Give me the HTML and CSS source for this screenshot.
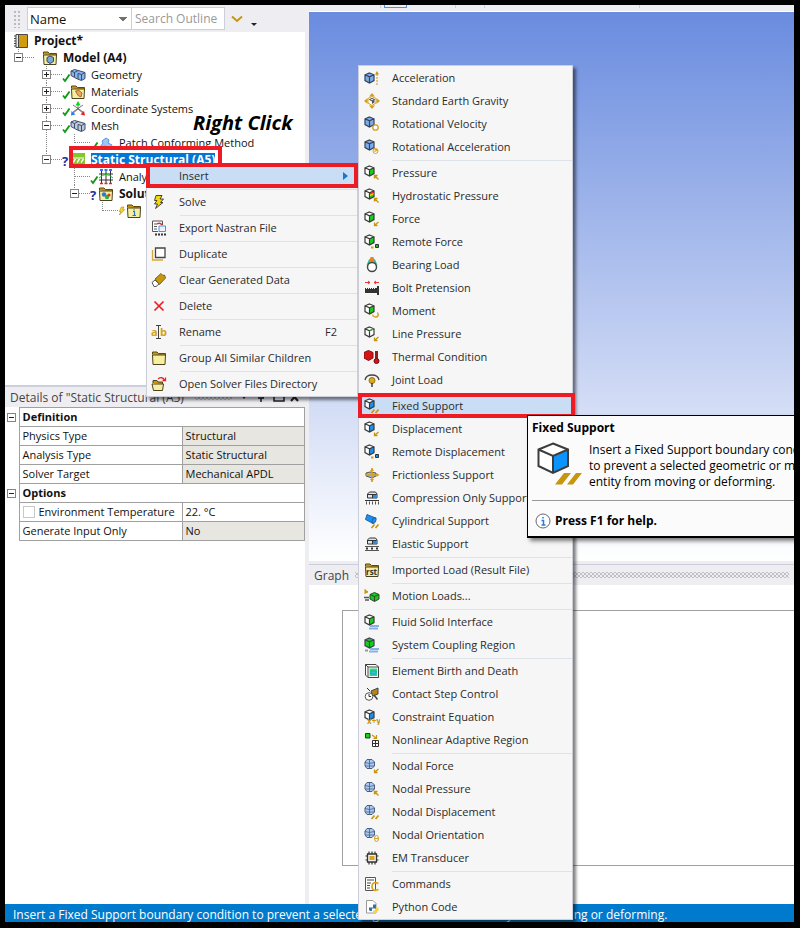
FILE: index.html
```html
<!DOCTYPE html>
<html lang="en">
<head>
  <meta charset="UTF-8">
  <title>Mechanical - Static Structural</title>
  <link rel="stylesheet" href="styles.css">
</head>
<body>

<!-- icon shapes -->
<svg class="defs" width="0" height="0">
  <symbol id="cube" viewBox="0 0 16 16">
    <path d="M5.5 1 10 2.8V8.6L5.5 11 1 8.6V2.8Z" fill="#fff"/>
    <path d="M5.5 4.8 10 2.8V8.6L5.5 11Z" fill="currentColor"/>
    <path d="M5.5 1 10 2.8V8.6L5.5 11 1 8.6V2.8ZM1 2.8 5.5 4.8 10 2.8M5.5 4.8V11" fill="none" stroke="#3a3a3a" stroke-width="1.2"/>
  </symbol>
  <symbol id="solid" viewBox="0 0 16 16">
    <path d="M5.5 1 10 2.8V8.6L5.5 11 1 8.6V2.8Z" fill="currentColor"/>
    <path d="M5.5 1 10 2.8V8.6L5.5 11 1 8.6V2.8ZM1 2.8 5.5 4.8 10 2.8M5.5 4.8V11" fill="none" stroke="#3a4250" stroke-width="1.2"/>
  </symbol>
  <symbol id="node" viewBox="0 0 16 16">
    <path d="M3 1.5H8L10.5 4V8L8 10.5H3L1 8V4Z" fill="#a9cbf6" stroke="#4a5d7d"/>
    <path d="M1 4.5 5.5 5.5 10.5 4.5M5.5 1.5V10.5M1.500 8H10" fill="none" stroke="#4a5d7d" stroke-width=".8"/>
  </symbol>
  <symbol id="arrow-in" viewBox="0 0 16 16"><path d="M14.500 14.500 11 11M10.500 13.500V10.500H13.500" fill="none" stroke="#c8960c" stroke-width="1.400"/></symbol>
  <symbol id="arrow-out" viewBox="0 0 16 16"><path d="M14.500 11 11 14M10.500 11.500V14.500H13.500" fill="none" stroke="#c8960c" stroke-width="1.300"/></symbol>
  <symbol id="stripes" viewBox="0 0 16 16"><path d="M7.500 15 10.500 11.500M11.500 15 14.500 11.500" fill="none" stroke="#c8960c" stroke-width="1.700"/></symbol>
  <symbol id="folder" viewBox="0 0 16 16">
    <path d="M1.500 4.500V2H6L7.500 3.500H14.500V5.500" fill="#c8960c" stroke="#5a4a10"/>
    <path d="M1.500 5H14.500L14 14.500H2Z" fill="#f7efa0" stroke="#4a4320"/>
  </symbol>
  <symbol id="flash" viewBox="0 0 16 16"><path d="M5 1.500H11L9 5H12.500L9.500 8.500H12L4.500 14.500 6.500 10H3.500L6 6.500H3.500Z" fill="#f5d90a" stroke="#333" stroke-width=".9"/></symbol>
  <symbol id="ground" viewBox="0 0 16 16">
    <path d="M5.500 2H11.500L13 4V8H3.500V4Z" fill="#dfe6ee" stroke="#333"/>
    <path d="M8.500 4.500H12.500V8H8.500Z" fill="#1a90f0"/><path d="M3.500 4.500H12.500M8.500 4.500V8" stroke="#333"/>
  </symbol>
  <symbol id="check" viewBox="0 0 8 16"><path d="M1 11.500 3 14 7.500 7.500" fill="none" stroke="#119a17" stroke-width="1.900"/></symbol>
  <symbol id="parts" viewBox="0 0 16 16">
    <path d="M4.500 2.500 10 4 15 5.500V11.500L11.500 13.500 7.500 12 4.500 10.500 1 8.500V4Z" fill="currentColor" stroke="#3d4c66"/>
    <path d="M1 4 4.500 5.500 8 3.500M4.500 5.500V10M8 6.500 11.500 7.500 15 5.500M8 6.500V12M11.500 7.500V13" fill="none" stroke="#3d4c66"/>
  </symbol>
</svg>

<div class="screen">
  <div class="side">
    <section class="outline">
      <div class="toolbar">
        <span class="grip"></span>
        <select class="name-select" aria-label="Search by"><option>Name</option></select>
        <input class="search" type="text" placeholder="Search Outline" aria-label="Search Outline">
        <svg class="expand" viewBox="0 0 12 8"><path d="M1 1.500 6 6 11 1.500" fill="none" stroke="#c8960c" stroke-width="2"/></svg>
        <span class="caret"></span>
      </div>

      <div class="tree">
        <div class="row root">
          <svg class="icon" viewBox="0 0 16 16"><path d="M3.500 1.500H14.500V14.500H3.500Z" fill="#cf9c12" stroke="#4b4b4b"/><path d="M3 1.500H5.500V14.500H3Z" fill="#e8eef5" stroke="#444"/><path d="M1 3H3M1 5.500H3M1 8H3M1 10.500H3M1 13H3" stroke="#444"/></svg>
          <b>Project*</b>
        </div>
        <ul>
          <li>
            <div class="row">
              <span class="toggle"></span><span class="mark"></span>
              <svg class="icon"><use href="#folder"/><path d="M8 6 11.500 7.500V11.500L8 13.500 5 11.500V7.500Z" fill="#7aa6dc" stroke="#39485f"/></svg>
              <b>Model (A4)</b>
            </div>
            <ul>
              <li>
                <div class="row"><span class="toggle plus"></span><svg class="mark"><use href="#check"/></svg><svg class="icon part-blue"><use href="#parts"/></svg><span>Geometry</span></div>
              </li>
              <li>
                <div class="row"><span class="toggle plus"></span><svg class="mark"><use href="#check"/></svg><svg class="icon"><use href="#folder"/><path d="M5.500 7 9 6.500 12 9 11 13 8 11.500Z" fill="#e8a868" stroke="#a96b2c"/></svg><span>Materials</span></div>
              </li>
              <li>
                <div class="row"><span class="toggle plus"></span><svg class="mark"><use href="#check"/></svg>
                  <svg class="icon" viewBox="0 0 16 16"><path d="M8 8V2M8 8 2 13M8 8 14 13M3 4 13 11M13 4 3 11" stroke="#555" stroke-width=".8"/><path d="M8 0 10.500 4.500H5.500Z" fill="#12d512"/><path d="M1 14.500 1.500 10 5.500 13.500Z" fill="#2b7bea"/><path d="M15 14.500 10.500 13.500 14 10Z" fill="#ee1c1c"/></svg>
                  <span>Coordinate Systems</span></div>
              </li>
              <li>
                <div class="row"><span class="toggle"></span><svg class="mark"><use href="#check"/></svg><svg class="icon part-grey"><use href="#parts"/></svg><span>Mesh</span></div>
                <ul>
                  <li>
                    <div class="row"><span class="stub"></span><svg class="mark"><use href="#check"/></svg>
                      <svg class="icon" viewBox="0 0 16 16"><path d="M2 12 5 8 4 6 8 3 11 5 10 8 14 10 12 14 7 11Z" fill="#9cc6f5" stroke="#5a94dd"/></svg>
                      <span>Patch Conforming Method</span></div>
                  </li>
                </ul>
              </li>
              <li>
                <div class="row marked">
                  <span class="toggle"></span><span class="mark query">?</span>
                  <svg class="icon" viewBox="0 0 16 16"><path d="M1 1H15V15H1Z" fill="#84c62c"/><path d="M3 6H14" stroke="#fff"/><path d="M3 10.500 5.500 7M7 10.500 9.500 7M11 10.500 13.500 7" stroke="#fff" stroke-width="1.300"/></svg>
                  <b class="selected">Static Structural (A5)</b>
                </div>
                <ul>
                  <li>
                    <div class="row"><span class="stub"></span><svg class="mark"><use href="#check"/></svg>
                      <svg class="icon" viewBox="0 0 16 16"><path d="M3.500 2V14M8 2V14M12.500 2V14M1 5H15M1 11H15" stroke="#333"/><path d="M1 9Q8 2 15 9" fill="none" stroke="#19c419"/><path d="M2 1H5M6.500 1H9.500M11 1H14" stroke="#1637e8" stroke-width="1.500"/><path d="M2 14.500H5M6.500 14.500H9.500M11 14.500H14" stroke="#ee2222" stroke-width="1.500"/></svg>
                      <span>Analysis Settings</span></div>
                  </li>
                  <li>
                    <div class="row"><span class="toggle"></span><span class="mark query">?</span><svg class="icon"><use href="#folder"/><circle cx="6" cy="8.500" r="2.200" fill="#2f76d9"/><circle cx="9" cy="11" r="2.200" fill="#28b34a"/><circle cx="11" cy="9" r="1.600" fill="#d8382c"/></svg><b>Solution (A6)</b></div>
                    <ul>
                      <li>
                        <div class="row"><span class="stub"></span><svg class="mark" viewBox="2 0 12 16"><path d="M7 2H11L9 6H12L4 14 6.500 9H4Z" fill="#f9dc24" stroke="#b98a12"/></svg><svg class="icon"><use href="#folder"/><path d="M7 8.500H8.500V12.500M6.500 12.500H10M8 6.200V7.400" fill="none" stroke="#2a6fd6" stroke-width="1.200"/></svg><span>Solution Information</span></div>
                      </li>
                    </ul>
                  </li>
                </ul>
              </li>
            </ul>
          </li>
        </ul>
      </div>
      <strong class="note">Right Click</strong>
    </section>

    <section class="details">
      <div class="panel-title">
        <span>Details of "Static Structural (A5)"</span>
        <span class="dots"></span>
        <svg class="title-tools" viewBox="0 0 62 12"><path d="M3 4H9L6 8Z" fill="#222"/><path d="M20 7H26M21 1H25V7M23 7V11" fill="none" stroke="#222" stroke-width="1.500"/><path d="M36 2H46V10H36Z" fill="none" stroke="#222" stroke-width="1.500"/><path d="M53 2 60 10M60 2 53 10" stroke="#222" stroke-width="2"/></svg>
      </div>
      <table>
        <colgroup><col class="col-gutter"><col class="col-name"><col></colgroup>
        <tbody>
          <tr class="group"><td class="gutter"><span class="toggle"></span></td><th colspan="2">Definition</th></tr>
          <tr><td class="gutter"></td><th scope="row">Physics Type</th><td class="fixed">Structural</td></tr>
          <tr><td class="gutter"></td><th scope="row">Analysis Type</th><td class="fixed">Static Structural</td></tr>
          <tr><td class="gutter"></td><th scope="row">Solver Target</th><td class="fixed">Mechanical APDL</td></tr>
          <tr class="group"><td class="gutter"><span class="toggle"></span></td><th colspan="2">Options</th></tr>
          <tr><td class="gutter"></td><th scope="row"><label><input type="checkbox">Environment Temperature</label></th><td>22. °C</td></tr>
          <tr><td class="gutter"></td><th scope="row">Generate Input Only</th><td class="fixed">No</td></tr>
        </tbody>
      </table>
    </section>
  </div>

  <main class="work">
    <section class="view">
      <div class="strip"><i class="wide"></i><i class="active"></i><i class="mid"></i><i class="narrow"></i><i class="rest"></i></div>
      <div class="canvas"></div>
    </section>
    <section class="graph">
      <div class="panel-title"><span>Graph</span><span class="dots"></span></div>
      <div class="plot"></div>
    </section>
  </main>

  <footer class="status">Insert a Fixed Support boundary condition to prevent a selected geometric or mesh entity from moving or deforming.</footer>

  <ul class="menu context">
    <li class="framed"><button class="hover"><span class="icon"></span>Insert<span class="more"></span></button></li>
    <li class="sep"></li>
    <li><button><svg class="icon"><use href="#flash"/></svg>Solve</button></li>
    <li class="sep"></li>
    <li><button><svg class="icon" viewBox="0 0 16 16"><path d="M7 11.500H1.500V1H11.500V5" fill="#fff" stroke="#555"/><path d="M3 4H6M3 6.500H6M3 9H6" stroke="#555"/><path d="M6 4Q9 2 11 5" fill="none" stroke="#e22" stroke-width="1.500"/><path d="M8 6H14.500V11.500H8Z" fill="#eaf3ff" stroke="#4a90e2"/><path d="M4 14.500H15" stroke="#333" stroke-width="2" stroke-dasharray="2 1"/></svg>Export Nastran File</button></li>
    <li class="sep"></li>
    <li><button><svg class="icon" viewBox="0 0 16 16"><path d="M1.500 4V14H12" fill="none" stroke="#d3a93a" stroke-width="1.300"/><path d="M4.500 2H14V11.500H4.500Z" fill="#fff" stroke="#444" stroke-width="1.300"/></svg>Duplicate</button></li>
    <li class="sep"></li>
    <li><button><svg class="icon" viewBox="0 0 16 16"><path d="M1 10.500 4 8 8 12 5 14.500H3Z" fill="#fff" stroke="#555"/><path d="M4 7 10 1.500 12 3.500 13.500 3 14.500 6 8.500 12.500Z" fill="#c8960c" stroke="#7c651c"/></svg>Clear Generated Data</button></li>
    <li class="sep"></li>
    <li><button><svg class="icon" viewBox="0 0 16 16"><path d="M3.500 3.500 12.500 12.500M12.500 3.500 3.500 12.500" stroke="#ed1c24" stroke-width="1.700"/></svg>Delete</button></li>
    <li class="sep"></li>
    <li><button><svg class="icon" viewBox="0 0 16 16"><text class="glyph" x="0" y="12">a</text><text class="glyph" x="9" y="12">b</text><path d="M5 1.500H10M5 14.500H10M7.500 1.500V14.500" stroke="#444"/></svg>Rename<kbd>F2</kbd></button></li>
    <li class="sep"></li>
    <li><button><svg class="icon"><use href="#folder"/></svg>Group All Similar Children</button></li>
    <li class="sep"></li>
    <li><button><svg class="icon" viewBox="0 0 16 16"><path d="M2 7V4.500H6L7 6H11.500V8" fill="#c8960c" stroke="#4a4320"/><path d="M1 8H12.500L11.500 14.500H2.500Z" fill="#f7efa0" stroke="#4a4320"/><path d="M7 3Q11 0 13.500 4M14.500 1.500V4.500H11.500" fill="none" stroke="#e22" stroke-width="1.300"/></svg>Open Solver Files Directory</button></li>
  </ul>

  <ul class="menu insert">
    <li><button><svg class="icon blue-soft"><use href="#solid" y="2"/><path d="M13 15V4" stroke="#c8960c" stroke-dasharray="2 1"/><path d="M13 1 15 4.500H11Z" fill="#c8960c"/></svg>Acceleration</button></li>
    <li><button><svg class="icon" viewBox="0 0 16 16"><path d="M8 0 11 3.500H5ZM8 16 11 12.500H5ZM0 8 3.500 5V11ZM16 8 12.500 5V11Z" fill="#d3a020"/><path d="M8 3.500 12 5.500V10L8 12.500 4 10V5.500Z" fill="#fff" stroke="#d3a020"/><path d="M5.500 6.500 8 5.500 10.500 6.500 8 8Z" fill="#fff" stroke="#444"/><path d="M8 8 10.500 6.500V9.500L8 11Z" fill="#555"/></svg>Standard Earth Gravity</button></li>
    <li><button><svg class="icon blue-soft"><use href="#solid"/><circle cx="11.500" cy="11.500" r="2.700" fill="#fff" stroke="#d3a020" stroke-width="1.300"/></svg>Rotational Velocity</button></li>
    <li><button><svg class="icon blue-soft"><use href="#solid"/><circle cx="11.500" cy="12" r="2.500" fill="#fff" stroke="#d3a020"/><path d="M10 9.500 13 11 10.500 12.500" fill="none" stroke="#d3a020" stroke-width="1.300"/></svg>Rotational Acceleration</button></li>
    <li class="sep"></li>
    <li><button><svg class="icon green"><use href="#cube"/><use href="#arrow-in"/></svg>Pressure</button></li>
    <li><button><svg class="icon green"><use href="#cube"/><path d="M6 5 9.500 3.500V5L6 6.500Z" fill="#e22"/><path d="M6 6.500 9.500 5V6.500L6 8.200Z" fill="#fc0"/><use href="#arrow-in"/></svg>Hydrostatic Pressure</button></li>
    <li><button><svg class="icon green"><use href="#cube"/><use href="#arrow-out"/></svg>Force</button></li>
    <li><button><svg class="icon green"><use href="#cube"/><path d="M11.500 10.500H14.500V13.500H11.500Z" fill="#19c419" stroke="#333"/><path d="M7 13.500H9.500" stroke="#d3a020" stroke-width="2"/></svg>Remote Force</button></li>
    <li><button><svg class="icon" viewBox="0 0 16 16"><path d="M2.500 8 5 2.500 8 1V6Z" fill="#28b8a0"/><path d="M13.500 8 11 2.500 8 1V6Z" fill="#28b8a0"/><path d="M5.500 5 6.500 0H9.500L10.500 5Z" fill="#f08018"/><circle cx="8" cy="10" r="4.500" fill="#fff" stroke="#444" stroke-width="1.400"/></svg>Bearing Load</button></li>
    <li><button><svg class="icon" viewBox="0 0 16 16"><path d="M1 2.500H6M10 2.500H15M4 1 6 2.500 4 4M12 1 10 2.500 12 4" fill="none" stroke="#e33"/><path d="M1 10.500H13" stroke="#333" stroke-width="5"/><path d="M14 6V15" stroke="#333" stroke-width="2"/><path d="M2 8.500H12" stroke="#f5f5f5" stroke-dasharray="1 1"/></svg>Bolt Pretension</button></li>
    <li><button><svg class="icon green"><use href="#cube"/><path d="M13.500 9.500Q15.500 14 11.500 14 8.500 14 9 11.500" fill="none" stroke="#d3a020" stroke-width="1.400"/></svg>Moment</button></li>
    <li><button><svg class="icon clear"><use href="#cube"/><path d="M5.500 4.800 10 2.800" stroke="#19c419"/><use href="#arrow-out"/></svg>Line Pressure</button></li>
    <li><button><svg class="icon" viewBox="0 0 16 16"><path d="M4.500 1.500 9 3.500V9L4.500 11.500 0 9V3.500Z" fill="#d51515" stroke="#7a1010"/><path d="M12.500 2V12" stroke="#8e1d1d" stroke-width="3"/><circle cx="12.500" cy="12" r="2.500" fill="#d51515" stroke="#6d1010"/></svg>Thermal Condition</button></li>
    <li><button><svg class="icon" viewBox="0 0 16 16"><path d="M1 8Q2 3 8 3T15 8" fill="none" stroke="#444" stroke-width="1.300"/><circle cx="8" cy="8.500" r="3" fill="#dba928" stroke="#9a7414"/><path d="M8 11V15" stroke="#333" stroke-width="1.400"/></svg>Joint Load</button></li>
    <li class="sep"></li>
    <li class="framed wide"><button class="hover"><svg class="icon blue"><use href="#cube"/><use href="#stripes"/></svg>Fixed Support</button></li>
    <li><button><svg class="icon blue"><use href="#cube"/><use href="#arrow-out"/></svg>Displacement</button></li>
    <li><button><svg class="icon blue"><use href="#cube"/><path d="M11.500 10.500H14.500V13.500H11.500Z" fill="#1a90f0" stroke="#333"/><path d="M7 13.500H9.500" stroke="#d3a020" stroke-width="2"/></svg>Remote Displacement</button></li>
    <li><button><svg class="icon" viewBox="0 0 16 16"><path d="M2 6 6 5 12 6V9L8 11 2 9Z" fill="#aeb7bf" stroke="#555"/><path d="M8 1V15M2 8H14" stroke="#d3a020" stroke-width="1.500"/><path d="M8 1 10 4H6ZM8 15 10 12H6ZM15.500 8 12.500 6V10Z" fill="#d3a020"/></svg>Frictionless Support</button></li>
    <li><button><svg class="icon"><use href="#ground"/><path d="M1 10.500H15" stroke="#333"/><path d="M2 13H15" stroke="#555" stroke-width="3" stroke-dasharray="1 2"/></svg>Compression Only Support</button></li>
    <li><button><svg class="icon" viewBox="0 0 16 16"><path d="M3 1.500 11.500 5 9 10.500 1.500 6.500Z" fill="#1a90f0" stroke="#2464a8"/><ellipse cx="10" cy="7.500" rx="1.700" ry="3" fill="#1a90f0" stroke="#2464a8" transform="rotate(25 10 7.500)"/><use href="#stripes"/></svg>Cylindrical Support</button></li>
    <li><button><svg class="icon"><use href="#ground"/><path d="M1 10.500H15M1 14.500H15" stroke="#555"/><path d="M2 12.500H15" stroke="#333" stroke-width="2" stroke-dasharray="2 3"/></svg>Elastic Support</button></li>
    <li class="sep"></li>
    <li><button><svg class="icon"><use href="#folder"/><text class="tag" x="2" y="13">rst</text></svg>Imported Load (Result File)</button></li>
    <li class="sep"></li>
    <li><button><svg class="icon" viewBox="0 0 16 16"><path d="M1 1V6M1 2 4 4 1 5" stroke="#c8960c" fill="#c8960c"/><path d="M0 9.500H5M1 12H5" stroke="#555" stroke-width="1.500"/><path d="M10.500 4.500 15 6.500V11L10.500 13.500 6 11V6.500Z" fill="#25c12c" stroke="#244d26"/><path d="M6 6.500 10.500 8.500 15 6.500M10.500 8.500V13" fill="none" stroke="#244d26"/></svg>Motion Loads...</button></li>
    <li class="sep"></li>
    <li><button><svg class="icon green"><use href="#cube"/><path d="M6 12H15M5 14.500H14" stroke="#8ab0e8" stroke-width="2"/></svg>Fluid Solid Interface</button></li>
    <li><button><svg class="icon green"><use href="#solid"/><path d="M6 12H15M5 14.500H14" stroke="#8ab0e8" stroke-width="2"/><path d="M1 13.500H4" stroke="#999" stroke-width="2"/></svg>System Coupling Region</button></li>
    <li class="sep"></li>
    <li><button><svg class="icon" viewBox="0 0 16 16"><path d="M1.500 1.500H12L14.500 4V14.500H4L1.500 12Z" fill="#fff" stroke="#444"/><path d="M4 4H14.500V14.500M4 4V14.500M1.500 1.500 4 4" fill="none" stroke="#444"/><path d="M5.500 5.500H13V13H5.500Z" fill="#27dc71"/><path d="M7 8H12V11H7Z" fill="#27c8e0" stroke="#3b90f5"/></svg>Element Birth and Death</button></li>
    <li><button><svg class="icon" viewBox="0 0 16 16"><path d="M7 5 14 2V8L9 10Z" fill="#b78612" stroke="#444"/><circle cx="5" cy="10.500" r="3.800" fill="#fff" stroke="#555"/><path d="M5 8V10.500H7M3 2 6 5" fill="none" stroke="#333"/><path d="M10 9 13.500 13.500" stroke="#444" stroke-width="1.500"/></svg>Contact Step Control</button></li>
    <li><button><svg class="icon blue"><use href="#cube"/><text class="tag gold" x="3" y="15">x+y</text></svg>Constraint Equation</button></li>
    <li><button><svg class="icon" viewBox="0 0 16 16"><path d="M1.500 1.500H6V6H1.500Z" fill="#12d512" stroke="#333"/><path d="M8 3 12 6M12.500 3V6.500H9.500" fill="none" stroke="#c8960c" stroke-width="1.200"/><path d="M8.500 8.500H14.500V14.500H8.500ZM11.500 8.500V14.500M8.500 11.500H14.500" fill="#fff" stroke="#333"/></svg>Nonlinear Adaptive Region</button></li>
    <li class="sep"></li>
    <li><button><svg class="icon"><use href="#node"/><use href="#arrow-out"/></svg>Nodal Force</button></li>
    <li><button><svg class="icon"><use href="#node"/><use href="#arrow-in"/></svg>Nodal Pressure</button></li>
    <li><button><svg class="icon"><use href="#node"/><use href="#stripes"/></svg>Nodal Displacement</button></li>
    <li><button><svg class="icon"><use href="#node"/><ellipse cx="12.500" cy="11.500" rx="2" ry="3" fill="none" stroke="#d3a020"/><path d="M10.500 11.500H14.500" stroke="#d3a020"/></svg>Nodal Orientation</button></li>
    <li><button><svg class="icon" viewBox="0 0 16 16"><path d="M5 1.500V14.500M8 1.500V14.500M11 1.500V14.500M1.500 6H14.500M1.500 10H14.500" stroke="#333" stroke-width="1.200"/><path d="M3.500 4H12.500V12H3.500Z" fill="#f1f1f1" stroke="#333" stroke-width="1.300"/><path d="M5.500 6H10.500V10H5.500Z" fill="#dba31a"/></svg>EM Transducer</button></li>
    <li class="sep"></li>
    <li><button><svg class="icon" viewBox="0 0 16 16"><path d="M1.500 1.500H11.500V14.500H1.500Z" fill="#fff" stroke="#555"/><path d="M3 4H10M3 7H7M3 9.500H6M3 12H6" stroke="#444" stroke-width="1.200"/><path d="M14.500 7.500Q8 5 8 10.500T14.500 13.500" fill="none" stroke="#d8a518" stroke-width="1.700"/></svg>Commands</button></li>
    <li><button><svg class="icon" viewBox="0 0 16 16"><path d="M2.500 1.500H9L12 4.500V14H2.500Z" fill="#fff" stroke="#999"/><path d="M5 11V8.500H9V5.500H12V9.500H8V12H6Z" fill="#3572a5"/><path d="M9 14.500V11.500H12V8.500H14.500V12H12V14.500Z" fill="#fbd23c"/></svg>Python Code</button></li>
  </ul>

  <div class="tooltip" role="tooltip">
    <b>Fixed Support</b>
    <div class="tip-body">
      <svg class="tip-icon" viewBox="0 0 46 46">
        <path d="M16 1.500 31 7.500V23L16 31 1.500 24V7.500Z" fill="#fff"/>
        <path d="M16 14 31 8V23L16 30.500Z" fill="#0a94ff"/>
        <path d="M16 1.500 31 7.500V24L16 31 1.500 24V7.500ZM1.500 7.500 16 14 31 7.500M16 14V31" fill="none" stroke="#3c3c3c" stroke-width="2"/>
        <path d="M18 42.500 27 31H34L25 42.500ZM30 42.500 39 31H45L36 42.500Z" fill="#c8960c"/>
      </svg>
      <p>Insert a Fixed Support boundary condition<br>to prevent a selected geometric or mesh<br>entity from moving or deforming.</p>
    </div>
    <div class="tip-help">
      <svg viewBox="0 0 16 16"><circle cx="8" cy="8" r="7" fill="#fff" stroke="#667"/><path d="M8 4V5.500M6.500 7.500H8.500V12M6.500 12H10.500" fill="none" stroke="#2a7be0" stroke-width="1.500"/></svg>
      <b>Press F1 for help.</b>
    </div>
  </div>
</div>

</body>
</html>
```
FILE: styles.css
```css
*, *::before, *::after { box-sizing: border-box; }
body { margin: 0; font-family: "Open Sans", "Noto Sans", sans-serif; font-size: 11px; color: #111; background: #000; }
ul { list-style: none; margin: 0; padding: 0; }
button, input, select { font: inherit; color: inherit; }
.defs { position: absolute; }
.icon { width: 16px; height: 16px; flex: none; }

.screen { position: relative; display: grid; grid-template-columns: 304px 1fr; grid-template-rows: 1fr 18px; min-height: 100vh; border: 5px solid #000; border-right-width: 6px; border-bottom-width: 6px; background: #fff; overflow: hidden; }
.side { display: grid; grid-template-rows: 382fr 517fr; padding-right: 4px; background: #eeeef2; }
.work { display: grid; grid-template-rows: 559fr 340fr; min-width: 0; }

/* outline */
.outline { position: relative; background: #fff; border-bottom: 2px solid #ccd0de; }
.toolbar { display: flex; align-items: center; height: 27px; padding: 0 8px; background: #eeeef2; font-size: 12px; }
.grip { width: 7px; height: 18px; margin-right: 7px; background: radial-gradient(#bbb 1px, transparent 1px) 0 0 / 4px 4px; }
.name-select { width: 105px; height: 23px; padding: 0 2px; border: 1px solid #cccedb; border-radius: 0; appearance: none; font-size: 13px; background: linear-gradient(45deg, transparent 50%, #717171 50%) 91px 9px / 4px 4px no-repeat, linear-gradient(-45deg, transparent 50%, #717171 50%) 95px 9px / 4px 4px no-repeat, #fff; }
.search { width: 93px; height: 23px; padding: 0 3px; border: 1px solid #ccceda; border-left: 0; background: #fff; }
.search::placeholder { color: #999; opacity: 1; }
.expand { width: 12px; height: 8px; margin: 0 8px 0 6px; }
.caret { margin-top: 12px; border: 3px solid transparent; border-top-color: #222; border-bottom: 0; }
.tree { padding-left: 8px; white-space: nowrap; }
.tree b { font-size: 12px; }
.tree li { position: relative; }
.tree li li { margin-left: 28px; }
.tree li::before { content: ""; position: absolute; left: 5px; top: 0; bottom: 0; border-left: 1px dotted #888; }
.tree li:last-child::before { bottom: auto; height: 9px; }
.row { position: relative; display: flex; align-items: center; height: 17px; }
.row b, .row > span:last-child { margin-left: 5px; }
.toggle { position: relative; flex: none; width: 9px; height: 9px; margin: 0 11px 0 1px; border: 1px solid #848484; background: linear-gradient(#222, #222) center / 5px 1px no-repeat, #fff; }
.toggle.plus { background: linear-gradient(#222, #222) center / 5px 1px no-repeat, linear-gradient(#222, #222) center / 1px 5px no-repeat, #fff; }
.tree .toggle::after { content: ""; position: absolute; left: 8px; top: 3px; width: 11px; border-top: 1px dotted #888; }
.stub { flex: none; width: 15px; margin: 0 0 0 6px; border-top: 1px dotted #888; }
.mark { flex: none; width: 8px; height: 16px; }
.query { color: #1c2f9c; font-size: 13px; font-weight: bold; line-height: 18px; }
.part-blue { color: #86b4ee; }
.part-grey { color: #bccbdc; }
.selected { background: #0078d7; color: #fff; line-height: 14px; }
.marked::after { content: ""; position: absolute; left: 28px; top: -5px; width: 153px; height: 22px; border: 4px solid #ed1c24; }
.note { position: absolute; left: 188px; top: 105px; font-size: 20px; line-height: 26px; font-style: italic; color: #000; }

/* details */
.details { background: #fff; }
.panel-title { display: flex; align-items: center; height: 20px; padding: 0 5px; gap: 6px; background: #eeeef2; color: #444; font-size: 12px; white-space: nowrap; }
.dots { flex: 1; height: 6px; background: radial-gradient(#c0c0c4 1px, transparent 1px) 0 0 / 4px 4px, radial-gradient(#c0c0c4 1px, transparent 1px) 2px 2px / 4px 4px; }
.title-tools { width: 62px; height: 12px; }
table { width: 100%; border-collapse: collapse; table-layout: fixed; font-size: 11px; }
.col-gutter { width: 14px; }
.col-name { width: 163px; }
th, td { height: 19px; padding: 0 3px; border: 1px solid #a0a0a0; font-weight: normal; text-align: left; line-height: 16px; white-space: nowrap; }
.group th { font-weight: bold; }
td.gutter { padding: 0 0 0 2px; border-width: 0 1px 0 0; }
.gutter .toggle { margin: 0; display: block; }
.fixed { background: #e8e6e1; }
label { display: flex; align-items: center; gap: 4px; }
label input { appearance: none; flex: none; width: 12px; height: 12px; margin: 0; border: 1px solid #c8c8c8; background: #fff; }

/* geometry view and graph */
.view { display: flex; flex-direction: column; padding-bottom: 3px; background: #eeeef2; }
.strip { display: flex; height: 7px; padding-bottom: 3px; border-bottom: 1px solid #fff; }
.strip i { border-right: 1px solid #ccceda; }
.strip .wide { width: 72px; margin-right: 3px; }
.strip .active { width: 23px; border: 1px solid #3399ff; border-top: 0; }
.strip .mid { width: 49px; }
.strip .narrow { width: 29px; }
.strip .rest { width: 155px; }
.canvas { flex: 1; background: linear-gradient(#6a8cdf, #cdd8f4 68%, #fff); }
.graph { display: flex; flex-direction: column; border-top: 1px solid #ccceda; }
.plot { flex: 1; margin: 25px 0 38px 33px; border: 1px solid #a0a0a0; border-right: 0; }
.status { grid-column: 1 / -1; padding-left: 8px; background: #007acc; color: #fff; font-size: 12px; line-height: 21px; white-space: nowrap; overflow: hidden; }

/* menus */
.menu { position: absolute; border: 1px solid #ccceda; background: #f6f6f6; box-shadow: 3px 3px 3px rgba(0, 0, 0, .5); }
.context { left: 141px; top: 158px; width: 212px; padding-bottom: 1px; }
.insert { left: 353px; top: 60px; width: 215px; padding-bottom: 1px; }
.menu li { position: relative; }
.menu button { display: flex; align-items: center; width: 100%; height: 23px; padding: 0 0 0 5px; border: 0; background: none; color: #2b2b2b; text-align: left; white-space: nowrap; }
.menu button .icon { margin-right: 12px; }
.context button { padding-left: 4px; }
.menu .hover { background: #c9def5; }
.menu .sep { height: 3px; margin-left: 33px; border-bottom: 1px solid #dde1e8; }
.framed::after { content: ""; position: absolute; inset: -1px; border: 4px solid #ed1c24; }
.framed.wide::after { right: -3px; }
.more { margin-left: auto; margin-right: 9px; border: 4px solid transparent; border-left: 5px solid #1877d2; border-right: 0; }
kbd { margin-left: auto; margin-right: 20px; font: inherit; }
.glyph { fill: #d3a020; font: bold 11px "Open Sans", sans-serif; }
.tag { fill: #333; font: bold 8px "Open Sans", sans-serif; }
.gold { fill: #c8960c; }
.green { color: #16d01c; }
.blue { color: #1a90f0; }
.blue-soft { color: #79aef0; }
.clear { color: #fff; }

/* tooltip */
.tooltip { position: absolute; left: 522px; top: 410px; width: 320px; padding: 4px; border: 1px solid #000; border-bottom-width: 2px; background: #fbfbfb; color: #000; font-size: 12px; line-height: 16px; white-space: nowrap; box-shadow: 3px 3px 4px rgba(0, 0, 0, .5); }
.tip-body { display: flex; gap: 6px; padding: 6px 0 10px 5px; }
.tip-icon { width: 46px; height: 46px; }
.tip-body p { margin: 0; }
.tip-help { display: flex; align-items: center; gap: 4px; padding: 12px 3px 3px; border-top: 1px solid #999; }
.tip-help svg { width: 16px; height: 16px; }
```
